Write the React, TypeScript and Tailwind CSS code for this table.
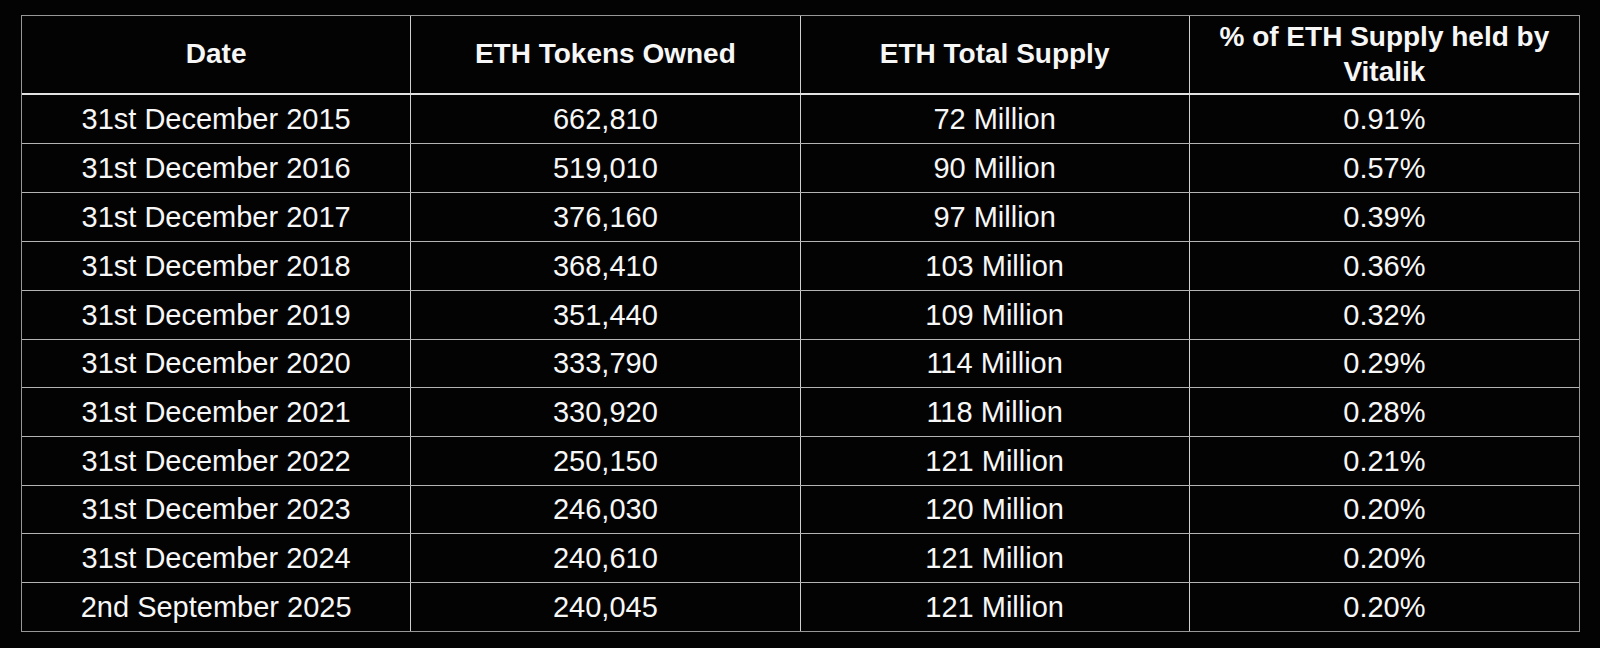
import React from "react";

const rows: { d: string; o: string; s: string; p: string; h: string }[] = [
  { d: "31st December 2015", o: "662,810", s: "72 Million", p: "0.91%", h: "h-[49px]" },
  { d: "31st December 2016", o: "519,010", s: "90 Million", p: "0.57%", h: "h-[49px]" },
  { d: "31st December 2017", o: "376,160", s: "97 Million", p: "0.39%", h: "h-[49px]" },
  { d: "31st December 2018", o: "368,410", s: "103 Million", p: "0.36%", h: "h-[49px]" },
  { d: "31st December 2019", o: "351,440", s: "109 Million", p: "0.32%", h: "h-[49px]" },
  { d: "31st December 2020", o: "333,790", s: "114 Million", p: "0.29%", h: "h-[48px]" },
  { d: "31st December 2021", o: "330,920", s: "118 Million", p: "0.28%", h: "h-[49px]" },
  { d: "31st December 2022", o: "250,150", s: "121 Million", p: "0.21%", h: "h-[49px]" },
  { d: "31st December 2023", o: "246,030", s: "120 Million", p: "0.20%", h: "h-[48px]" },
  { d: "31st December 2024", o: "240,610", s: "121 Million", p: "0.20%", h: "h-[49px]" },
  { d: "2nd September 2025", o: "240,045", s: "121 Million", p: "0.20%", h: "h-[48px]" },
];

export default function App() {
  return (
    <div
      className="w-[1600px] h-[648px] bg-[#030303] pt-[15px] pl-[21px] text-[#f7f7f7]"
      style={{ fontFamily: '"Liberation Sans", Arial, Helvetica, sans-serif' }}
    >
      <div className="w-[1559px] border border-[#979797]">
        <div className="grid grid-cols-4 h-[79px] border-b-2 border-[#e2e2e2] font-bold text-[28px] leading-[1.22]">
          <div className="flex items-center justify-center text-center border-r border-[#cfcfcf] px-2">Date</div>
          <div className="flex items-center justify-center text-center border-r border-[#cfcfcf] px-2">ETH Tokens Owned</div>
          <div className="flex items-center justify-center text-center border-r border-[#cfcfcf] px-2">ETH Total Supply</div>
          <div className="flex items-center justify-center text-center px-6">% of ETH Supply held by Vitalik</div>
        </div>
        {rows.map((r, i) => (
          <div
            key={r.d}
            className={`grid grid-cols-4 ${r.h} text-[29px] leading-none ${
              i < rows.length - 1 ? "border-b border-[#b4b4b4]" : ""
            }`}
          >
            <div className="flex items-center justify-center border-r border-[#cfcfcf]">{r.d}</div>
            <div className="flex items-center justify-center border-r border-[#cfcfcf]">{r.o}</div>
            <div className="flex items-center justify-center border-r border-[#cfcfcf]">{r.s}</div>
            <div className="flex items-center justify-center">{r.p}</div>
          </div>
        ))}
      </div>
    </div>
  );
}
